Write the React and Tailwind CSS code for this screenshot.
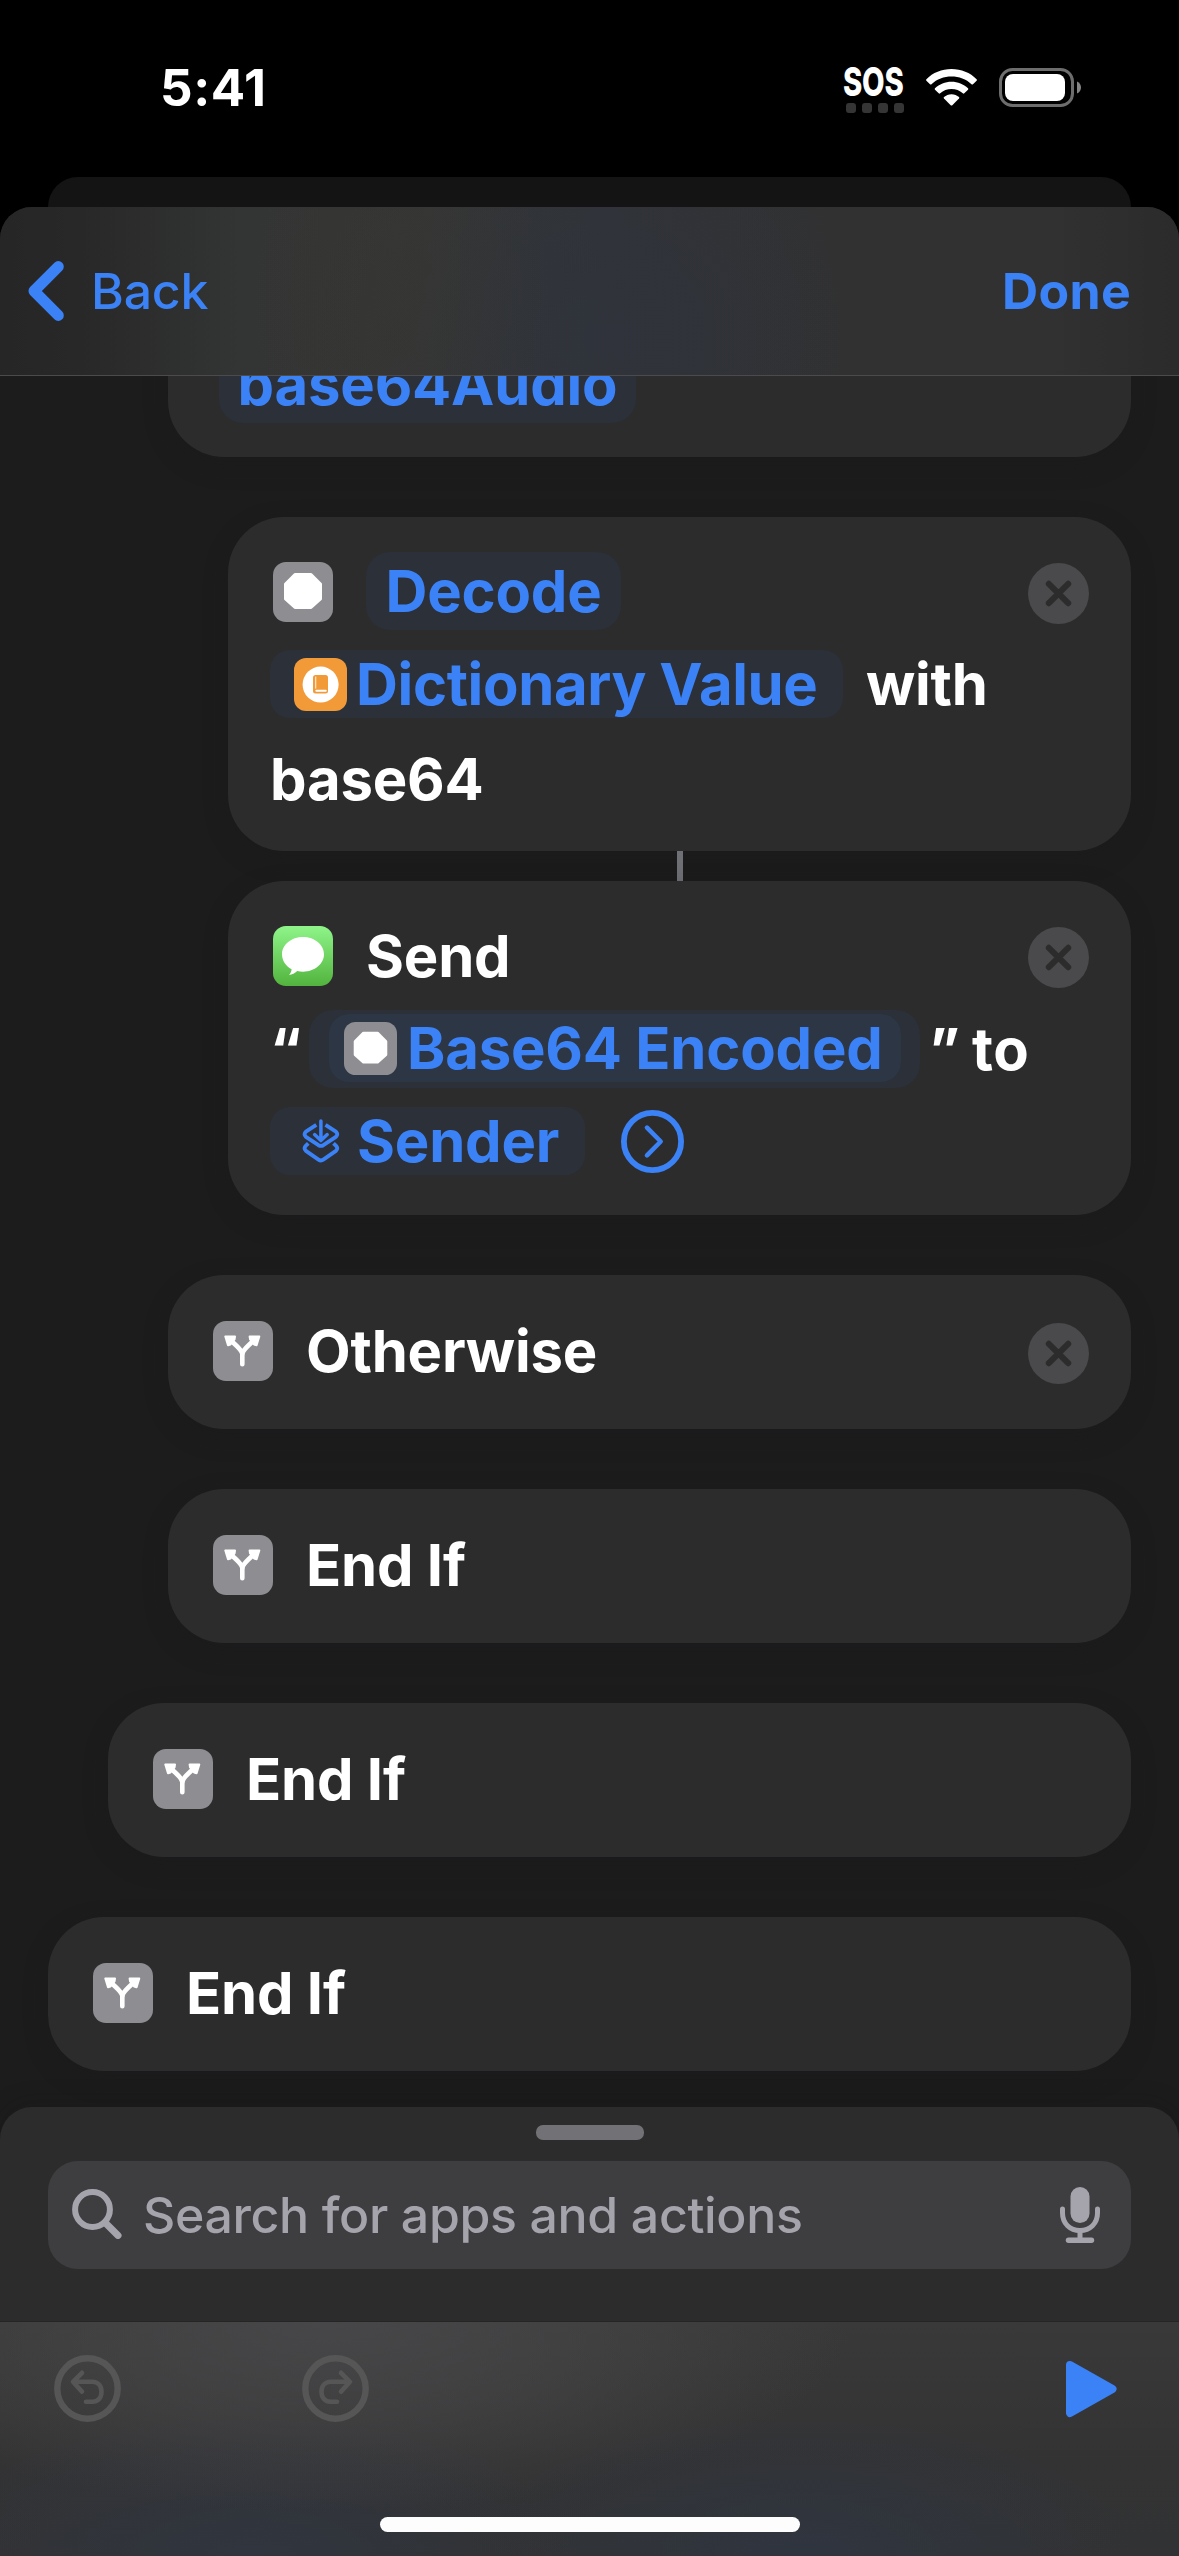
import React from "react";

const OCTAGON = "M22 12.5H38L47.5 22V37L38 45.5H22L12.5 37V22Z";

function ScriptIcon({ className }) {
  return (
    <svg viewBox="0 0 60 60" className={className}>
      <rect width="60" height="60" rx="13" fill="#8e8d92" />
      <path d={OCTAGON} fill="#fff" stroke="#fff" strokeWidth="3" strokeLinejoin="round" />
    </svg>
  );
}

function BranchIcon() {
  return (
    <svg viewBox="0 0 60 60" className="size-[60px] shrink-0">
      <rect width="60" height="60" rx="13" fill="#8e8d92" />
      <g fill="none" stroke="#fff" strokeWidth="4.6" strokeLinecap="round">
        <path d="M29.3 43.3V33C29 29 25 26.500 18 19.500" />
        <path d="M29.3 33C29.600 29 33.600 26.500 40.600 19.500" />
      </g>
      <g fill="#fff" stroke="#fff" strokeWidth="2" strokeLinejoin="round">
        <path d="M12.300 15.500H22L21.500 18.500L17.500 23.500L15 24.300Z" />
        <path d="M46.300 15.500H36.600L37.100 18.500L41.100 23.500L43.600 24.300Z" />
      </g>
    </svg>
  );
}

function MessagesIcon() {
  return (
    <svg viewBox="0 0 60 60" className="size-[60px] shrink-0">
      <defs>
        <linearGradient id="messages" x1="0" y1="0" x2="0" y2="1">
          <stop offset="0" stopColor="#8ff58a" />
          <stop offset="1" stopColor="#52b43d" />
        </linearGradient>
      </defs>
      <rect width="60" height="60" rx="13" fill="url(#messages)" />
      <path
        d="M30 11C41.600 11 51 18.600 51 28.300S41.600 45.700 30 45.700C28 45.700 26 45.500 24.200 45.100C22 47.500 19 48.900 16 49C17.500 47.200 18.500 45.200 18.600 43.200C12.800 40.200 9 34.600 9 28.300C9 18.600 18.400 11 30 11Z"
        fill="#fff"
      />
    </svg>
  );
}

function DictionaryIcon() {
  return (
    <svg viewBox="0 0 53 53" className="size-[53px] shrink-0">
      <rect width="53" height="53" rx="12" fill="#f29a38" />
      <circle cx="26.600" cy="26.600" r="18" fill="#fff" />
      <rect x="19" y="17" width="15" height="18.500" rx="2.500" fill="#f29a38" />
      <rect x="21.300" y="18.600" width="0.900" height="12" fill="#fff" />
      <rect x="21.300" y="31.800" width="11.500" height="2" rx="1" fill="#fff" />
    </svg>
  );
}

function ShortcutInputIcon() {
  return (
    <svg viewBox="0 0 38 44" className="h-[44px] w-[38px] shrink-0" fill="none" stroke="#3b82f7" strokeWidth="3.9" strokeLinecap="round" strokeLinejoin="round">
      <path d="M14.300 5.800L3.900 12.600Q1.200 15.200 3.900 17.800L16.500 26.200Q18.900 27.600 21.300 26.200L33.900 17.800Q36.600 15.200 33.900 12.600L23.500 5.800" strokeLinecap="butt" />
      <path d="M6.300 24.400L3.900 26.600Q1.200 29.200 3.900 31.800L16.500 40.600Q18.900 42.200 21.300 40.600L33.900 31.800Q36.600 29.200 33.900 26.600L31.500 24.400" strokeLinecap="butt" />
      <path d="M18.900 2V21.200M12.600 15.600L18.900 21.600L25.200 15.600" strokeWidth="3.500" />
    </svg>
  );
}

function RemoveButton({ className = "translate-y-[2px]" }) {
  return (
    <button className={`mr-[42px] ml-auto size-[61px] shrink-0 ${className}`}>
      <svg viewBox="0 0 61 61" className="size-full">
        <circle cx="30.500" cy="30.500" r="30.500" fill="#4a4a4c" />
        <path d="M20.800 20.800L40.200 40.200M40.200 20.800L20.800 40.200" stroke="#2c2c2c" strokeWidth="6" strokeLinecap="round" />
      </svg>
    </button>
  );
}

function Card({ className, children }) {
  return (
    <section className={`mr-[48px] rounded-[56px] bg-[#2c2c2c] shadow-[0_8px_24px_rgba(26,26,32,0.3)] ${className}`}>
      {children}
    </section>
  );
}

function BranchCard({ indent, label, removable }) {
  return (
    <Card className={`mb-[60px] flex h-[154px] items-center pb-[2px] pl-[45px] ${indent}`}>
      <BranchIcon />
      <span className="ml-[33px]">{label}</span>
      {removable && <RemoveButton />}
    </Card>
  );
}

function StatusBar() {
  return (
    <div className="flex h-[177px] items-start bg-black">
      <div className="mt-[63px] ml-[160px] w-[683px] text-[51px] leading-[50px] font-bold tracking-[0.6px]">5:41</div>
      <div className="mt-[62px] w-[62px]">
        <div className="h-[40px] w-[80px] origin-left scale-x-[0.73] text-[40px] leading-[40px] font-extrabold tracking-[-0.3px]">SOS</div>
        <div className="mt-px ml-[3px] flex gap-[6px]">
          <i className="size-[10px] rounded-[3px] bg-[#353535]" />
          <i className="size-[10px] rounded-[3px] bg-[#353535]" />
          <i className="size-[10px] rounded-[3px] bg-[#353535]" />
          <i className="size-[10px] rounded-[3px] bg-[#353535]" />
        </div>
      </div>
      <svg viewBox="0 0 51 37" className="mt-[69px] ml-[21px] h-[37px] w-[51px]" fill="#fff">
        <path d="M25.500 0C35.200 0 44.200 3.700 50.600 10.200Q51.300 11 50.600 11.700L47 15.200Q46.300 15.900 45.500 15.200C40.200 10 33 7.500 25.500 7.500S10.800 10 5.500 15.200Q4.700 15.900 4 15.200L0.400 11.700Q-0.300 11 0.400 10.200C6.800 3.700 15.800 0 25.500 0Z" />
        <path d="M25.500 12.700C31.800 12.700 37.600 15.100 42 19.200Q42.700 20 42 20.700L38.300 24.300Q37.600 25 36.800 24.300C33.700 21.600 29.800 20.100 25.500 20.100S17.300 21.600 14.200 24.300Q13.400 25 12.700 24.300L9 20.700Q8.300 20 9 19.200C13.400 15.100 19.200 12.700 25.500 12.700Z" />
        <path d="M25.500 25.200C28.400 25.200 31 26.300 33 28Q33.700 28.800 33 29.500L26.300 36.200Q25.500 37 24.700 36.200L18 29.500Q17.300 28.800 18 28C20 26.300 22.600 25.200 25.500 25.200Z" />
      </svg>
      <svg viewBox="0 0 83 39" className="mt-[68px] ml-[22px] h-[39px] w-[83px]">
        <rect x="1.500" y="1.500" width="72" height="36" rx="12" fill="none" stroke="#6d6d6d" strokeWidth="3" />
        <rect x="6" y="6" width="60" height="27" rx="8" fill="#fff" />
        <path d="M78 13.500C80.700 14.600 82 17 82 19.500S80.700 24.400 78 25.500Z" fill="#858585" />
      </svg>
    </div>
  );
}

function NavBar() {
  return (
    <header className="flex h-[169px] items-center rounded-t-[32px] border-b border-[#4b4b4d] bg-[radial-gradient(ellipse_150px_240px_at_400px_90px,#38383188_0%,#38383155_45%,#38383100_100%),radial-gradient(ellipse_280px_240px_at_590px_130px,#2f333ccc_0%,#2f333c88_45%,#2f333c00_100%),linear-gradient(90deg,#262626_0px,#282828_80px,#333434_240px,#353535_430px,#313336_600px,#313131_850px,#313131_1050px,#2b2b2b_1179px)] pr-[48px] text-[50px] text-[#3b82f7]">
      <svg viewBox="0 0 36 60" className="ml-[28px] h-[60px] w-[36px]" fill="none" stroke="#3b82f7" strokeWidth="11" strokeLinecap="round" strokeLinejoin="round">
        <path d="M30.300 5.600L6 30L30.300 54.400" />
      </svg>
      <span className="ml-[27px] font-[470] tracking-[-0.2px]">Back</span>
      <span className="ml-auto font-bold tracking-[0.3px]">Done</span>
    </header>
  );
}

function Workflow() {
  return (
    <main className="h-[1731px] overflow-hidden text-[58px] leading-[68px] font-[680] tracking-[-0.2px] whitespace-nowrap">
      <Card className="mt-[-66px] ml-[168px] h-[147px] pt-[35px] pl-[51px]">
        <span className="flex h-[78px] w-[417px] items-center justify-center rounded-[24px] bg-[#2b3039] text-[#3b82f7]">base64Audio</span>
      </Card>

      <Card className="mt-[60px] ml-[228px] h-[334px] pt-[35px]">
        <div className="flex h-[78px] items-center pl-[45px]">
          <ScriptIcon className="size-[60px] shrink-0 translate-y-px" />
          <span className="ml-[33px] flex h-[78px] w-[255px] items-center justify-center rounded-[24px] bg-[#2b3039] text-[#3b82f7]">Decode</span>
          <RemoveButton />
        </div>
        <div className="mt-[20px] ml-[42px] flex h-[68px] items-center">
          <span className="flex h-[68px] w-[573px] items-center rounded-[20px] bg-[#2c3039] pl-[24px] text-[#3b82f7]">
            <DictionaryIcon />
            <span className="ml-[9px] tracking-[-0.35px]">Dictionary Value</span>
          </span>
          <span className="ml-[23px]">with</span>
        </div>
        <div className="mt-[27px] ml-[42px]">base64</div>
      </Card>

      <div className="ml-[677px] h-[30px] w-[6px] bg-[#6f7076]" />

      <Card className="mb-[60px] ml-[228px] h-[334px] pt-[45px]">
        <div className="flex h-[60px] items-center pl-[45px]">
          <MessagesIcon />
          <span className="ml-[33px]">Send</span>
          <RemoveButton className="translate-y-[1px]" />
        </div>
        <div className="mt-[24px] ml-[42px] flex h-[78px] items-center">
          <span className="w-[39px]">“</span>
          <span className="flex h-[78px] w-[611px] items-center rounded-[24px] bg-[#2b3039] pl-[20px]">
            <span className="flex h-[68px] w-[572px] -translate-y-px items-center rounded-[20px] bg-[#2d3644] pl-[15px] text-[#3b82f7]">
              <ScriptIcon className="size-[53px] shrink-0" />
              <span className="ml-[10px]">Base64 Encoded</span>
            </span>
          </span>
          <span className="ml-[9px] w-[43px]">”</span>
          <span className="tracking-[0.5px]">to</span>
        </div>
        <div className="mt-[19px] ml-[42px] flex h-[68px] items-center">
          <span className="flex h-[68px] w-[315px] items-center rounded-[20px] bg-[#2c3039] pl-[32px] text-[#3b82f7]">
            <ShortcutInputIcon />
            <span className="ml-[17px]">Sender</span>
          </span>
          <svg viewBox="0 0 63 63" className="ml-[36px] size-[63px]" fill="none" stroke="#3b82f7" strokeLinecap="round" strokeLinejoin="round">
            <circle cx="31.500" cy="31.500" r="28.600" strokeWidth="5.800" />
            <path d="M26 17.700L39.700 31.500L26 45.300" strokeWidth="4.600" />
          </svg>
        </div>
      </Card>

      <BranchCard indent="ml-[168px]" label="Otherwise" removable />
      <BranchCard indent="ml-[168px]" label="End If" />
      <BranchCard indent="ml-[108px]" label="End If" />
      <BranchCard indent="ml-[48px]" label="End If" />
    </main>
  );
}

function SearchPanel() {
  return (
    <div className="h-[215px] rounded-t-[32px] border-b border-[#252525] bg-[#2c2c2c] px-[48px] pt-[18px] shadow-[0_-4px_24px_rgba(20,20,30,0.2)]">
      <div className="mx-auto h-[15px] w-[108px] rounded-[7px] bg-[#727176]" />
      <div className="mt-[21px] flex h-[108px] items-center rounded-[30px] bg-[#3e3e40] pr-[30px] pl-[24px] text-[#a5a4ac]">
        <svg viewBox="0 0 50 50" className="size-[50px] -translate-y-px" fill="none" stroke="#a5a4ac" strokeLinecap="round">
          <circle cx="20.500" cy="20.500" r="17.400" strokeWidth="6" />
          <path d="M33 33.500L46 46.500" strokeWidth="7" />
        </svg>
        <span className="ml-[21px] text-[50px] leading-[60px] font-medium tracking-[-0.35px]">Search for apps and actions</span>
        <svg viewBox="0 0 42 56" className="ml-auto h-[56px] w-[42px]" fill="none" stroke="#a5a4ac" strokeLinecap="round">
          <rect x="11.500" y="0" width="19" height="36" rx="9.500" fill="#a5a4ac" stroke="none" />
          <path d="M3.500 22V26C3.500 36.500 11 43.500 21 43.500S38.500 36.500 38.500 26V22" strokeWidth="5" />
          <path d="M21 44V52" strokeWidth="5" />
          <path d="M9.500 53.300H32.500" strokeWidth="5.400" />
        </svg>
      </div>
    </div>
  );
}

function HistoryIcon({ className }) {
  return (
    <svg viewBox="0 0 67 67" className={className} fill="none" stroke="#565657" strokeLinecap="round" strokeLinejoin="round">
      <circle cx="33.500" cy="33.500" r="30.200" strokeWidth="6.400" />
      <path d="M28 17.800L19 26.800L28 36.600M19.500 26.800H38.300C44 26.800 47.500 31 47.500 36.800S44 46.700 38.300 46.700H32" strokeWidth="4.600" />
    </svg>
  );
}

function Toolbar() {
  return (
    <footer className="flex h-[234px] flex-col bg-[radial-gradient(ellipse_520px_190px_at_330px_0px,#48484aee_0%,#48484a88_50%,#48484a00_100%),radial-gradient(ellipse_330px_140px_at_250px_234px,#30353f_0%,#30353f00_100%),radial-gradient(ellipse_330px_140px_at_800px_234px,#2f3540_0%,#2f354000_100%),linear-gradient(180deg,#393939_0%,#333334_60%,#313233_100%)]">
      <div className="mt-[33px] flex h-[67px] items-center pr-[61px] pl-[54px]">
        <HistoryIcon className="size-[67px]" />
        <HistoryIcon className="ml-[181px] size-[67px] -scale-x-100" />
        <svg viewBox="0 0 52 58" className="ml-auto h-[58px] w-[52px]" fill="#3b82f7" stroke="#3b82f7" strokeWidth="8" strokeLinejoin="round">
          <path d="M4 5L46.500 29L4 53Z" />
        </svg>
      </div>
      <div className="mx-auto mt-auto mb-[24px] h-[15px] w-[420px] rounded-full bg-[#fdfdfd]" />
    </footer>
  );
}

export default function App() {
  return (
    <div className="h-[2556px] w-[1179px] overflow-hidden bg-black font-['Inter',sans-serif] text-white">
      <StatusBar />
      <div className="mx-[48px] h-[30px] rounded-t-[30px] bg-[#141414]" />
      <div className="rounded-t-[32px] bg-[#1c1c1c]">
        <NavBar />
        <Workflow />
        <SearchPanel />
        <Toolbar />
      </div>
    </div>
  );
}
